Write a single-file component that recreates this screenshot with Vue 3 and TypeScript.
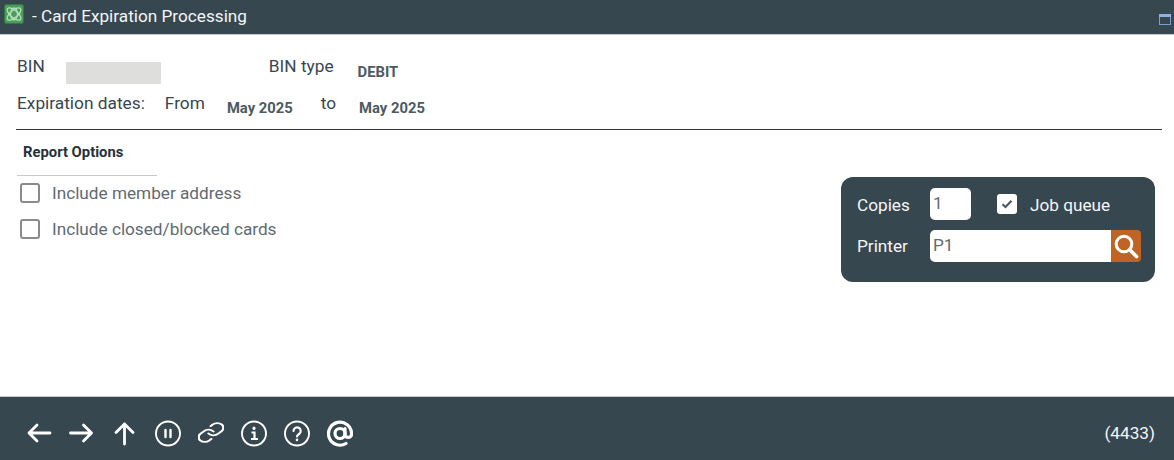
<template>
  <div class="page">
    <header class="title-bar">
      <svg class="logo" width="20" height="20" viewBox="0 0 20 20">
        <rect x="0.5" y="0.5" width="19" height="19" rx="2" fill="#4b9c5a" stroke="#2f7a3e" />
        <g fill="none" stroke="#b5dfba" stroke-width="1.300">
          <ellipse cx="10" cy="10" rx="8.500" ry="3.600" transform="rotate(40 10 10)" />
          <ellipse cx="10" cy="10" rx="8.500" ry="3.600" transform="rotate(-40 10 10)" />
          <ellipse cx="10" cy="10" rx="3.500" ry="6" />
        </g>
      </svg>
      <span class="title">- Card Expiration Processing</span>
      <svg class="win-icon" width="12" height="11" viewBox="0 0 12 11">
        <rect x="0.5" y="0.5" width="11" height="10" fill="none" stroke="#7f9fd0" />
        <rect x="0" y="0" width="12" height="3" fill="#8fb0e0" />
      </svg>
    </header>

    <main class="content">
      <div class="row row-bin">
        <span class="lbl lbl-bin">BIN</span>
        <span class="redacted"></span>
        <span class="lbl lbl-type">BIN type</span>
        <span class="val val-type">DEBIT</span>
      </div>
      <div class="row row-dates">
        <span class="lbl lbl-exp">Expiration dates:</span>
        <span class="lbl lbl-from">From</span>
        <span class="val val-from">May 2025</span>
        <span class="lbl lbl-to">to</span>
        <span class="val val-to">May 2025</span>
      </div>
      <div class="rule"></div>

      <div class="lower">
        <section class="options">
          <h3 class="section-title">Report Options</h3>
          <div class="check-list">
            <label v-for="opt in options" :key="opt" class="check-row">
              <span class="box"></span>
              <span class="check-text">{{ opt }}</span>
            </label>
          </div>
        </section>

        <section class="print-panel">
          <div class="panel-row first">
            <span class="panel-lbl">Copies</span>
            <span class="field copies">1</span>
            <span class="job-box">
              <svg width="12" height="10" viewBox="0 0 12 10">
                <path d="M1.500 5.200 4.500 8 10.500 1.800" fill="none" stroke="#4c5a62" stroke-width="2.200" />
              </svg>
            </span>
            <span class="job-text">Job queue</span>
          </div>
          <div class="panel-row">
            <span class="panel-lbl">Printer</span>
            <span class="field printer">P1</span>
            <span class="search-btn">
              <svg width="28" height="28" viewBox="0 0 28 28">
                <circle cx="12" cy="12" r="7.800" fill="none" stroke="#fff" stroke-width="3" />
                <path d="M18 18 24.500 24.500" stroke="#fff" stroke-width="3.600" stroke-linecap="round" />
              </svg>
            </span>
          </div>
        </section>
      </div>
    </main>

    <footer class="foot">
      <div class="tools">
        <svg v-for="icon in icons" :key="icon.name" class="tool" viewBox="0 0 26 28" fill="none" stroke="#fff" stroke-width="2.200" stroke-linecap="round" stroke-linejoin="round">
          <g v-html="icon.body"></g>
        </svg>
      </div>
      <span class="code">(4433)</span>
    </footer>
  </div>
</template>

<script setup lang="ts">
const options: string[] = ['Include member address', 'Include closed/blocked cards']

interface ToolIcon {
  name: string
  body: string
}

const icons: ToolIcon[] = [
  { name: 'back', body: '<path d="M24 13H3M11 5l-8 8 8 8" stroke-width="2.800"/>' },
  { name: 'forward', body: '<path d="M1.500 13H22.500M14.500 5l8 8-8 8" stroke-width="2.800"/>' },
  { name: 'up', body: '<path d="M12.500 24V4M4 12.500 12.500 4 21 12.500" stroke-width="2.800"/>' },
  { name: 'pause', body: '<circle cx="13" cy="13.500" r="12" stroke-width="1.900"/><path d="M10.500 10v7M15.500 10v7" stroke-width="2.400"/>' },
  { name: 'link', body: '<g transform="translate(-2 1.100) scale(1.250 .95)" stroke-width="1.900"><path d="M10 13a5 5 0 0 0 7.540.54l3-3a5 5 0 0 0-7.070-7.070l-1.720 1.710"/><path d="M14 11a5 5 0 0 0-7.540-.54l-3 3a5 5 0 0 0 7.070 7.070l1.710-1.710"/></g>' },
  { name: 'info', body: '<circle cx="13" cy="13.500" r="12" stroke-width="1.900"/><path d="M13 8v.5" stroke-width="3"/><path d="M10.500 12.500H13.500V19M10 19h7" stroke-width="2.200" stroke-linecap="butt" stroke-linejoin="miter"/>' },
  { name: 'help', body: '<circle cx="13" cy="13.500" r="12" stroke-width="1.900"/><path d="M9.500 11a3.600 3.600 0 1 1 5.600 3c-1.400.9-2.100 1.500-2.100 2.500"/><path d="M13 19.700v.3" stroke-width="2.600"/>' },
  { name: 'at', body: '<circle cx="13" cy="13.500" r="5" stroke-width="3.200"/><path d="M18 8.500v6.500a3.400 3.400 0 0 0 6.500 0V13.500a11.500 11.500 0 1 0-5.500 10" stroke-width="3.200"/>' },
]
</script>

<style scoped>
.page {
  width: 1174px;
  height: 460px;
  display: flex;
  flex-direction: column;
  background: #fff;
  font-family: Roboto, "Liberation Sans", sans-serif;
  overflow: hidden;
}

.title-bar {
  height: 34px;
  flex: none;
  display: flex;
  align-items: center;
  padding: 0 3px 0 4px;
  background: #37474f;
  border-bottom: 1px solid #c4cbcf;
  box-sizing: content-box;
}

.logo {
  margin-top: -6px;
}

.title {
  margin: -2px 0 0 8px;
  color: #f4f6f7;
  font-size: 17.200px;
}

.win-icon {
  margin-left: auto;
  margin-top: 4px;
}

.content {
  flex: 1;
  padding: 0 19px 0 17px;
  color: #37474f;
}

.row {
  display: flex;
  font-size: 17.300px;
}

.row-bin {
  height: 37px;
  padding-top: 21px;
  box-sizing: content-box;
}

.row-dates {
  height: 36px;
  margin-top: 0;
}

.redacted {
  width: 95px;
  height: 22px;
  margin: 6px 0 0 21px;
  background: #dededc;
}

.lbl-type {
  margin-left: 108px;
}

.val {
  font-size: 14.800px;
  font-weight: 700;
  color: #4c5a62;
}

.val-type {
  margin: 7px 0 0 24px;
}

.lbl-from {
  margin-left: 20px;
}

.val-from {
  margin: 6px 0 0 22px;
}

.lbl-to {
  margin-left: 28px;
}

.val-to {
  margin: 6px 0 0 23px;
}

.rule {
  height: 1px;
  margin: 0 -7px 0 -1px;
  background: #333;
}

.lower {
  display: flex;
  justify-content: space-between;
}

.options {
  width: 140px;
}

.section-title {
  margin: 0;
  height: 46px;
  padding: 13px 0 0 6px;
  box-sizing: border-box;
  border-bottom: 1px solid #c9c9c9;
  font-size: 14.800px;
  font-weight: 700;
  color: #263238;
  white-space: nowrap;
}

.check-list {
  margin-top: -1px;
}

.check-row {
  display: flex;
  align-items: center;
  height: 36px;
  white-space: nowrap;
}

.box {
  width: 16px;
  height: 16px;
  flex: none;
  margin-left: 3px;
  border: 2px solid #8a8a8a;
  border-radius: 3px;
  background: #fff;
}

.check-text {
  margin-left: 12px;
  font-size: 17.200px;
  color: #5f6b72;
}

.print-panel {
  width: 314px;
  height: 105px;
  margin-top: 47px;
  padding: 11px 14px 0 16px;
  box-sizing: border-box;
  border-radius: 12px;
  background: #37474f;
}

.panel-row {
  display: flex;
  align-items: center;
  height: 32px;
}

.panel-row.first {
  margin-bottom: 10px;
}

.panel-lbl {
  width: 73px;
  flex: none;
  color: #f4f6f7;
  font-size: 17.200px;
}

.first .panel-lbl {
  padding-top: 2px;
}

.field {
  height: 32px;
  padding: 0 3px;
  box-sizing: border-box;
  line-height: 31px;
  background: #fff;
  color: #5f6b72;
  font-size: 17.200px;
}

.copies {
  width: 41px;
  border-radius: 5px;
}

.job-box {
  width: 20px;
  height: 20px;
  margin-left: 26px;
  display: flex;
  align-items: center;
  justify-content: center;
  border-radius: 3px;
  background: #fff;
}

.job-text {
  margin-left: 13px;
  padding-top: 2px;
  color: #f4f6f7;
  font-size: 17.200px;
  white-space: nowrap;
}

.printer {
  width: 181px;
  border-radius: 5px 0 0 5px;
}

.search-btn {
  width: 30px;
  height: 32px;
  display: flex;
  align-items: center;
  justify-content: center;
  border-radius: 0 4px 4px 0;
  background: #bf6424;
}

.foot {
  height: 64px;
  flex: none;
  display: flex;
  align-items: center;
  justify-content: space-between;
  padding: 11px 19px 0 26px;
  background: #37474f;
  border-top: 1px solid #c4cbcf;
  box-sizing: border-box;
}

.tools {
  display: flex;
  gap: 17px;
}

.tool {
  width: 26px;
  height: 28px;
}

.code {
  margin-top: -2px;
  color: #f4f6f7;
  font-size: 17.200px;
}
</style>
